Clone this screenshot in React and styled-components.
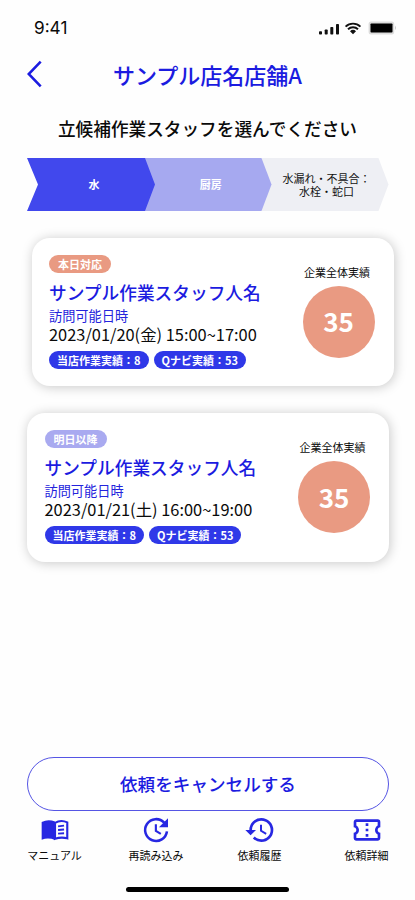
import styled, { createGlobalStyle } from "styled-components";
import { MdHistory, MdOutlineConfirmationNumber } from "react-icons/md";

const GlobalStyle = createGlobalStyle`
  * {
    box-sizing: border-box;
  }
  body {
    margin: 0;
    background-color: white;
    font-family: "Noto Sans CJK JP", sans-serif;
    color: #0a0a0a;
  }
`;

const Container = styled.div`
  width: 415px;
  height: 900px;
  display: flex;
  flex-direction: column;
  background-color: #fefefe;
  overflow: hidden;
`;

const StatusBar = styled.div`
  height: 56px;
  padding: 0px 18px 0px 34px;
  display: flex;
  align-items: center;
  justify-content: space-between;
`;

const Time = styled.span`
  font-family: Inter, sans-serif;
  font-size: 17.2px;
  font-weight: 400;
  line-height: 20px;
`;

const StatusIcons = styled.svg`
  width: 80px;
  height: 18px;
`;

const Header = styled.header`
  height: 38px;
  padding: 0px 27px;
  display: grid;
  grid-template-columns: 16px 1fr 16px;
  align-items: center;
`;

const BackButton = styled.button`
  width: 16px;
  height: 28px;
  margin-top: -2px;
  padding: 0;
  border: none;
  background: none;
  cursor: pointer;
`;

const BackIcon = styled.svg`
  display: block;
  width: 16px;
  height: 28px;
`;

const Title = styled.h1`
  margin: -2px 0px 0px;
  font-size: 22px;
  font-weight: 500;
  line-height: 36px;
  text-align: center;
  white-space: nowrap;
  color: #1b1be0;
`;

const Lead = styled.p`
  margin: 22px 0px 0px;
  font-size: 17.65px;
  font-weight: 500;
  line-height: 26px;
  text-align: center;
`;

const Steps = styled.div`
  height: 53px;
  margin: 16px 27px 0px;
  display: flex;
`;

const Step = styled.div`
  width: ${({ $width }) => $width}px;
  margin-right: -10px;
  display: flex;
  align-items: center;
  justify-content: center;
  text-align: center;
  font-size: 11px;
  line-height: 13.5px;
  font-weight: ${({ $weight }) => $weight};
  color: ${({ $color }) => $color};
  background-color: ${({ $bg }) => $bg};
  position: relative;
  z-index: ${({ $level }) => $level};
  clip-path: polygon(
    0 0,
    calc(100% - 10px) 0,
    100% 50%,
    calc(100% - 10px) 100%,
    0 100%,
    ${({ $notch }) => $notch}px 50%
  );
  padding-left: ${({ $pad }) => $pad}px;
  padding-top: 1px;
`;

const Cards = styled.div`
  margin-top: 26.5px;
  padding: 0px 27px;
  display: flex;
  flex-direction: column;
  gap: 27px;
`;

const Card = styled.div`
  width: 362px;
  height: 148.5px;
  margin-left: ${({ $shift }) => $shift || 0}px;
  padding: 17px 19px 0px 17.5px;
  display: flex;
  justify-content: space-between;
  border-radius: 18px;
  background-color: white;
  box-shadow: 1px 1px 12px rgba(0, 0, 0, 0.22);
`;

const Info = styled.div`
  display: flex;
  flex-direction: column;
  align-items: flex-start;
  white-space: nowrap;
`;

const Pill = styled.span`
  height: 18px;
  padding: 0px ${({ $pad }) => $pad || 8}px;
  border-radius: 9px;
  font-size: 11px;
  font-weight: 700;
  line-height: 18.5px;
  color: white;
  background-color: ${({ $bg }) => $bg || "#2f38e8"};
`;

const Name = styled.h2`
  margin: 6px 0px 0px;
  font-size: 17.7px;
  font-weight: 500;
  line-height: 26px;
  color: #1b1be0;
`;

const Label = styled.span`
  margin-top: 1px;
  font-size: 13.2px;
  line-height: 19px;
  color: #2424dc;
`;

const Visit = styled.span`
  font-size: 16.4px;
  line-height: 19px;
`;

const Pills = styled.div`
  margin-top: 7px;
  display: flex;
  gap: 5px;
`;

const Total = styled.div`
  padding-top: 8px;
  display: flex;
  flex-direction: column;
  align-items: center;
`;

const TotalLabel = styled.span`
  margin-right: 3px;
  font-size: 11px;
  line-height: 18px;
`;

const Circle = styled.div`
  width: 72px;
  height: 72px;
  margin-top: 5px;
  padding-bottom: 1px;
  border-radius: 50%;
  display: flex;
  align-items: center;
  justify-content: center;
  font-size: 26px;
  font-weight: 700;
  line-height: 36px;
  color: white;
  background-color: #e99a82;
`;

const CancelButton = styled.button`
  height: 54px;
  margin: auto 26px 0px 27px;
  padding: 0;
  border: 1px solid #5555e4;
  border-radius: 27px;
  font-family: inherit;
  font-size: 17.6px;
  font-weight: 500;
  color: #1b1be0;
  background-color: white;
  cursor: pointer;
`;

const Nav = styled.nav`
  height: 76px;
  padding: 3.5px 0px 0px 3px;
  display: grid;
  grid-template-columns: 103px 100px 107px 107px;
`;

const NavItem = styled.a`
  display: flex;
  flex-direction: column;
  align-items: center;
  font-size: 11px;
  line-height: 18px;
  white-space: nowrap;

  svg {
    width: 32px;
    height: 32px;
    color: #2727e2;
  }
`;

const HomeIndicator = styled.div`
  width: 163px;
  height: 5px;
  margin: 0px auto 8.5px;
  border-radius: 3px;
  background-color: black;
`;

const BookIcon = () => (
  <svg viewBox="0 0 24 24" fill="none" stroke="currentColor">
    <path
      d="M2 6 Q7 3.4 12 5.7 V19.5 Q7 17.5 2 19.3 Z"
      fill="currentColor"
      stroke="none"
    />
    <path
      d="M12 6.6 Q16.5 4 21.2 6.3 V18.2 Q16.5 17 12 18.6 Z"
      strokeWidth="1.6"
    />
    <path d="M14.3 9.3 L18.8 8.7 M14.3 12 L18.8 11.6 M14.3 14.7 L18.8 14.4" strokeWidth="1.4" />
  </svg>
);

const ReloadIcon = () => (
  <svg viewBox="0 0 24 24" fill="none" stroke="currentColor" strokeWidth="1.9">
    <path d="M20.2 13 A8.2 8.2 0 1 1 18.1 6.5" />
    <path d="M11.9 7.6 V12.6 L15.6 14.9" strokeWidth="1.6" />
    <path d="M21 3.2 V9.9 H14.2 Z" fill="currentColor" stroke="none" />
  </svg>
);

const staff = [
  {
    id: 1,
    tag: "本日対応",
    tagColor: "#e99a82",
    date: "2023/01/20(金) 15:00~17:00",
    shift: 4.5,
  },
  {
    id: 2,
    tag: "明日以降",
    tagColor: "#a9aaf0",
    date: "2023/01/21(土) 16:00~19:00",
  },
];

const navItems = [
  { label: "マニュアル", Icon: BookIcon },
  { label: "再読み込み", Icon: ReloadIcon },
  { label: "依頼履歴", Icon: MdHistory },
  { label: "依頼詳細", Icon: MdOutlineConfirmationNumber },
];

const StaffCard = ({ item }) => (
  <Card $shift={item.shift}>
    <Info>
      <Pill $bg={item.tagColor} $pad={9}>
        {item.tag}
      </Pill>
      <Name>サンプル作業スタッフ人名</Name>
      <Label>訪問可能日時</Label>
      <Visit>{item.date}</Visit>
      <Pills>
        <Pill>当店作業実績：8</Pill>
        <Pill>Qナビ実績：53</Pill>
      </Pills>
    </Info>
    <Total>
      <TotalLabel>企業全体実績</TotalLabel>
      <Circle>35</Circle>
    </Total>
  </Card>
);

const App = () => {
  return (
    <Container>
      <GlobalStyle />
      <StatusBar>
        <Time>9:41</Time>
        <StatusIcons viewBox="0 0 80 18">
          <g fill="#111">
            <rect x="2" y="12.2" width="3" height="3.3" rx="0.8" />
            <rect x="7.7" y="10.5" width="3" height="5" rx="0.8" />
            <rect x="13.3" y="8" width="3" height="7.5" rx="0.8" />
            <rect x="19" y="5" width="3" height="10.5" rx="0.8" />
            <path d="M36 15.3 L33 12.2 A4.3 4.3 0 0 1 39 12.2 Z" />
          </g>
          <g fill="none" stroke="#111" strokeWidth="1.9">
            <path d="M28.6 7.6 A10.6 10.6 0 0 1 43.4 7.6" />
            <path d="M31 10.3 A7.2 7.2 0 0 1 41 10.3" />
          </g>
          <rect x="51.6" y="2.6" width="25.6" height="12.8" rx="2.5" fill="#ddd" />
          <path d="M78 6.5 Q80 8.8 78 11 Z" fill="#ccc" />
          <rect x="53.5" y="4.5" width="22" height="9" rx="0.8" fill="#000" />
        </StatusIcons>
      </StatusBar>
      <Header>
        <BackButton aria-label="戻る">
          <BackIcon viewBox="0 0 16 28">
            <path
              d="M13.7 1.7 L1.7 14 L13.7 26.3"
              fill="none"
              stroke="#1b1be0"
              strokeWidth="2.6"
            />
          </BackIcon>
        </BackButton>
        <Title>サンプル店名店舗A</Title>
      </Header>
      <Lead>立候補作業スタッフを選んでください</Lead>
      <Steps>
        <Step $width={128} $notch={11} $pad={6} $level={3} $weight={700} $color="white" $bg="#4148ed">
          水
        </Step>
        <Step $width={126.5} $notch={0} $pad={5} $level={2} $weight={700} $color="white" $bg="#a6a9f0">
          厨房
        </Step>
        <Step $width={127} $notch={0} $pad={3} $level={1} $weight={400} $color="#111" $bg="#eeeff4">
          水漏れ・不具合：
          <br />
          水栓・蛇口
        </Step>
      </Steps>
      <Cards>
        {staff.map((item) => (
          <StaffCard key={item.id} item={item} />
        ))}
      </Cards>
      <CancelButton>依頼をキャンセルする</CancelButton>
      <Nav>
        {navItems.map(({ label, Icon }) => (
          <NavItem key={label}>
            <Icon />
            {label}
          </NavItem>
        ))}
      </Nav>
      <HomeIndicator />
    </Container>
  );
};

export default App;
